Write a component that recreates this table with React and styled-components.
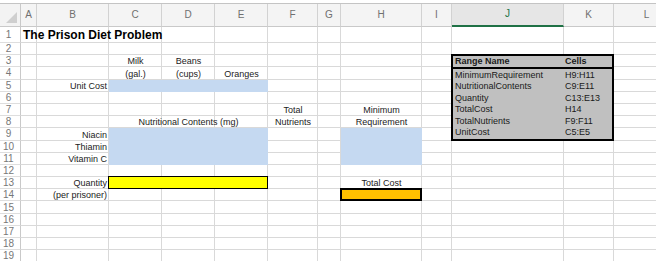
import React from "react";
import styled, { createGlobalStyle } from "styled-components";

// column letters with their widths in px (right gridline included)
const COLUMNS = [
  ["A", 16],
  ["B", 72],
  ["C", 53],
  ["D", 53],
  ["E", 53],
  ["F", 50],
  ["G", 23],
  ["H", 81],
  ["I", 30],
  ["J", 112],
  ["K", 50],
  ["L", 66],
];
const ROWS = 19;
const SELECTED_COL = "J";

const colIndex = (letter) => COLUMNS.findIndex(([c]) => c === letter) + 2;

const labels = [
  { row: 1, col: "A", text: "The Prison Diet Problem", title: true },
  { row: 3, col: "C", text: "Milk", align: "center" },
  { row: 3, col: "D", text: "Beans", align: "center" },
  { row: 4, col: "C", text: "(gal.)", align: "center" },
  { row: 4, col: "D", text: "(cups)", align: "center" },
  { row: 4, col: "E", text: "Oranges", align: "center" },
  { row: 5, col: "B", text: "Unit Cost", align: "right" },
  { row: 7, col: "F", text: "Total", align: "center" },
  { row: 7, col: "H", text: "Minimum", align: "center" },
  { row: 8, col: "C", span: 3, text: "Nutritional Contents (mg)", align: "center" },
  { row: 8, col: "F", text: "Nutrients", align: "center" },
  { row: 8, col: "H", text: "Requirement", align: "center" },
  { row: 9, col: "B", text: "Niacin", align: "right" },
  { row: 10, col: "B", text: "Thiamin", align: "right" },
  { row: 11, col: "B", text: "Vitamin C", align: "right" },
  { row: 13, col: "B", text: "Quantity", align: "right" },
  { row: 13, col: "H", text: "Total Cost", align: "center" },
  { row: 14, col: "B", text: "(per prisoner)", align: "right" },
];

const fills = [
  { row: 5, col: "C", rows: 1, cols: 3, color: "#c5d9f1" },
  { row: 9, col: "C", rows: 3, cols: 3, color: "#c5d9f1" },
  { row: 9, col: "H", rows: 3, cols: 1, color: "#c5d9f1" },
  { row: 13, col: "C", rows: 1, cols: 3, color: "#ffff00", border: 1 },
  { row: 14, col: "H", rows: 1, cols: 1, color: "#ffc000", border: 2 },
];

const rangeNames = [
  ["MinimumRequirement", "H9:H11"],
  ["NutritionalContents", "C9:E11"],
  ["Quantity", "C13:E13"],
  ["TotalCost", "H14"],
  ["TotalNutrients", "F9:F11"],
  ["UnitCost", "C5:E5"],
];

const GlobalStyle = createGlobalStyle`
  html, body {
    margin: 0;
    padding: 0;
    background: #fff;
    overflow: hidden;
  }
  body {
    font-family: "Liberation Sans", Arial, sans-serif;
    color: #1f1f1f;
  }
`;

const Window = styled.div`
  width: 656px;
  height: 261px;
  padding-top: 3px;
  box-sizing: border-box;
  overflow: hidden;
`;

const Sheet = styled.div`
  display: grid;
  grid-template-columns: 21px ${COLUMNS.map(([, w]) => `${w}px`).join(" ")};
  grid-template-rows: 23px 16px repeat(${ROWS - 1}, 12.2px);
  border-top: 1px solid #c4c4c4;
  width: max-content;
`;

const Corner = styled.div`
  grid-row: 1;
  grid-column: 1;
  display: flex;
  align-items: flex-end;
  justify-content: flex-end;
  padding: 0 3px 3px 0;
  background: #f3f3f3;
  border-right: 1px solid #c9c9c9;
  border-bottom: 1px solid #c9c9c9;

  &::after {
    content: "";
    width: 0;
    height: 0;
    border-left: 11px solid transparent;
    border-bottom: 11px solid #cfcfcf;
  }
`;

const ColHead = styled.div`
  grid-row: 1;
  grid-column: ${(p) => p.$col};
  display: flex;
  align-items: center;
  justify-content: center;
  padding-bottom: 2px;
  font-size: 10px;
  color: ${(p) => (p.$selected ? "#217346" : "#707070")};
  background: ${(p) => (p.$selected ? "#e6e6e6" : "#f4f4f4")};
  border-right: 1px solid #d2d2d2;
  border-bottom: ${(p) => (p.$selected ? "2px solid #1f7145" : "1px solid #c9c9c9")};
`;

const RowHead = styled.div`
  grid-row: ${(p) => p.$row};
  grid-column: 1;
  display: flex;
  align-items: center;
  justify-content: center;
  padding-right: 3px;
  font-size: 10px;
  color: #777;
  background: #fff;
  border-right: 1px solid #c9c9c9;
  border-bottom: 1px solid #dedede;
`;

const GridCell = styled.div`
  grid-row: ${(p) => p.$row};
  grid-column: ${(p) => p.$col};
  border-right: 1px solid #d9d9d9;
  border-bottom: 1px solid #d9d9d9;
`;

const Fill = styled.div`
  grid-row: ${(p) => p.$row} / span ${(p) => p.$rows};
  grid-column: ${(p) => p.$col} / span ${(p) => p.$cols};
  background: ${(p) => p.$color};
  border: ${(p) => (p.$border ? `${p.$border}px solid #000` : "none")};
  margin: ${(p) => (p.$border ? "-1px 0 0 -1px" : "0")};
`;

const Label = styled.div`
  grid-row: ${(p) => p.$row};
  grid-column: ${(p) => p.$col} / span ${(p) => p.$span || 1};
  display: flex;
  align-items: flex-end;
  justify-content: ${(p) =>
    p.$align === "right" ? "flex-end" : p.$align === "center" ? "center" : "flex-start"};
  padding: 0 2px 1px;
  white-space: nowrap;
  font-size: ${(p) => (p.$title ? "12px" : "9px")};
  font-weight: ${(p) => (p.$title ? 700 : 400)};
  line-height: ${(p) => (p.$title ? "14px" : "10px")};
  color: ${(p) => (p.$title ? "#000" : "#222")};
`;

const RangeBox = styled.div`
  grid-row: 4 / span 7;
  grid-column: ${colIndex("J")} / span 2;
  display: grid;
  grid-template-columns: 110px 1fr;
  grid-template-rows: repeat(7, 1fr);
  margin: -1px 0 0 -1px;
  background: #c0c0c0;
  border: 2px solid #000;
`;

const RangeCell = styled.div`
  display: flex;
  align-items: flex-end;
  padding: 0 2px 1px;
  font-size: 9px;
  line-height: 10px;
  white-space: nowrap;
  color: #1a1a1a;
  font-weight: ${(p) => (p.$head ? 700 : 400)};
  border-bottom: ${(p) => (p.$head ? "2px solid #000" : "none")};
`;

const App = () => {
  const cells = [];
  for (let r = 1; r <= ROWS; r++) {
    cells.push(
      <RowHead key={`h${r}`} $row={r + 1}>
        {r}
      </RowHead>
    );
    COLUMNS.forEach(([c]) => {
      cells.push(<GridCell key={`${c}${r}`} $row={r + 1} $col={colIndex(c)} />);
    });
  }

  return (
    <Window>
      <GlobalStyle />
      <Sheet>
        <Corner />
        {COLUMNS.map(([c]) => (
          <ColHead key={c} $col={colIndex(c)} $selected={c === SELECTED_COL}>
            {c}
          </ColHead>
        ))}
        {cells}
        {fills.map((f, i) => (
          <Fill
            key={i}
            $row={f.row + 1}
            $col={colIndex(f.col)}
            $rows={f.rows}
            $cols={f.cols}
            $color={f.color}
            $border={f.border}
          />
        ))}
        {labels.map((l, i) => (
          <Label
            key={i}
            $row={l.row + 1}
            $col={colIndex(l.col)}
            $span={l.span}
            $align={l.align}
            $title={l.title}
          >
            {l.text}
          </Label>
        ))}
        <RangeBox>
          <RangeCell $head>Range Name</RangeCell>
          <RangeCell $head>Cells</RangeCell>
          {rangeNames.map(([name, cells]) => (
            <React.Fragment key={name}>
              <RangeCell>{name}</RangeCell>
              <RangeCell>{cells}</RangeCell>
            </React.Fragment>
          ))}
        </RangeBox>
      </Sheet>
    </Window>
  );
};

export default App;
